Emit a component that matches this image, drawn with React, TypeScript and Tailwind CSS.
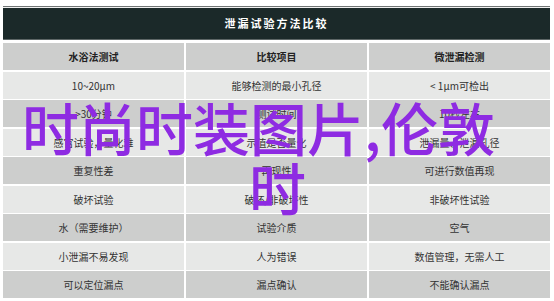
const rows: [string, string, string][] = [
    ['10~20μm', '能够检测的最小孔径', '< 1μm可检出'],
    ['>30分钟', '测试时间', '10秒左右'],
    ['感官试验，量化难', '示值是否量化', '泄漏量、泄漏孔径'],
    ['重复性差', '再现性', '可进行数值再现'],
    ['破坏试验', '破坏/非破坏性', '非破坏性试验'],
    ['水（需要维护）', '试验介质', '空气'],
    ['小泄漏不易发现', '人为错误', '数值管理，无需人工'],
    ['可以定位漏点', '漏点确认', '不能确认漏点'],
];

const App = () => {
    return (
        <div
            className="relative w-[554px] h-[301px] overflow-hidden bg-white px-[3px] pt-[6px]"
            style={{ fontFamily: '"Noto Sans CJK SC", "Noto Sans", sans-serif' }}
        >
            <div className="w-[547px]">
                {/* title bar */}
                <div className="h-px bg-[#6f7474]" />
                <div className="h-px bg-[#f0f0f0]" />
                <div className="h-[31px] bg-[#1b2929] flex items-center justify-center text-white text-[11px] font-bold tracking-[2px]">
                    泄漏试验方法比较
                </div>
                <div className="h-px bg-[#5d6666]" />

                <div className="mt-[3px] grid grid-cols-3 auto-rows-[27px] gap-x-[2px] gap-y-[1.5px] text-[10px] text-[#333]">
                    <div className="bg-[#cdcecd] flex items-center justify-center font-bold text-[#222]">水浴法测试</div>
                    <div className="bg-[#cdcecd] flex items-center justify-center font-bold text-[#222]">比较项目</div>
                    <div className="bg-[#cdcecd] flex items-center justify-center font-bold text-[#222]">微泄漏检测</div>
                    {rows.map((row, i) =>
                        row.map((cell, j) => (
                            <div
                                key={`${i}-${j}`}
                                className={`flex items-center justify-center ${i % 2 === 0 ? 'bg-[#e7e8e7]' : 'bg-[#cdcecd]'}`}
                            >
                                {cell}
                            </div>
                        ))
                    )}
                </div>
            </div>

            {/* overlay caption */}
            <div className="absolute left-0 top-[96px] w-full text-[57px] leading-[60px] font-medium text-[#8e2be2] whitespace-nowrap">
                <div className="pl-[22px]">时尚时装图片,伦敦</div>
                <div className="pl-[249px]">时</div>
            </div>
        </div>
    );
};

export default App;
